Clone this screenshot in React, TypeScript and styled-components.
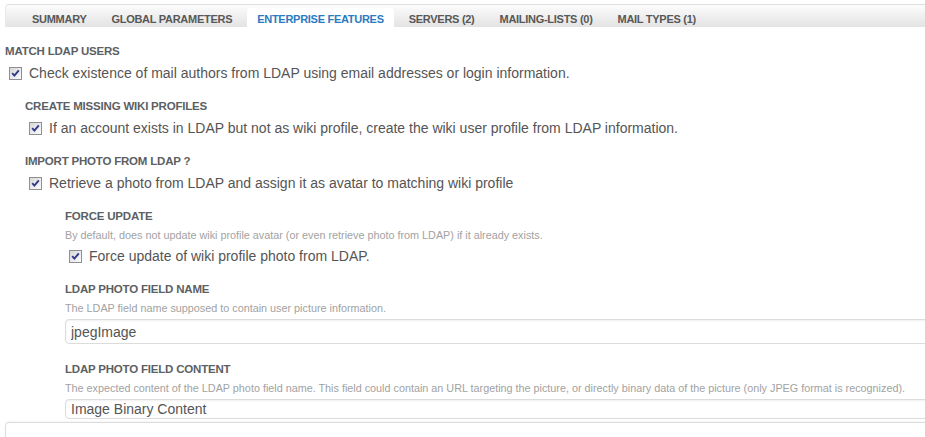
import React, { useEffect, useRef } from "react";
import styled, { createGlobalStyle } from "styled-components";

const Global = createGlobalStyle`
  html, body { margin: 0; padding: 0; background: #fff; overflow: clip; }
  body { font-family: "Liberation Sans", Arial, sans-serif; color: #555; }
`;

const Page = styled.div`
  width: 925px;
  height: 437px;
  position: relative;
  overflow: clip;
`;

const TabBar = styled.nav`
  display: flex;
  align-items: flex-end;
  gap: 5px;
  margin: 4px -20px 0 5px;
  height: 22px;
  padding-left: 16px;
  border-top: 1px solid #dedede;
  border-left: 1px solid #e8e8e8;
  border-top-left-radius: 4px;
  background: linear-gradient(#fcfcfc, #e3e3e3);
`;

const Tab = styled.div<{ $active?: boolean }>`
  height: 19px;
  box-sizing: border-box;
  padding: 3px 10px 0;
  line-height: 16px;
  font-size: 11px;
  letter-spacing: -0.28px;
  font-weight: bold;
  white-space: nowrap;
  color: ${(p) => (p.$active ? "#2a7bc0" : "#585858")};
  background: ${(p) => (p.$active ? "#fff" : "transparent")};
  border-radius: 4px 4px 0 0;
`;

const Content = styled.div`
  padding: 16px 0 0 5px;
`;

const Field = styled.section<{ $indent?: number }>`
  display: flex;
  flex-direction: column;
  align-items: flex-start;
  margin-left: ${(p) => p.$indent ?? 0}px;
  &:not(:first-child) {
    margin-top: 14px;
  }
`;

const Heading = styled.div`
  font-size: 11.5px;
  letter-spacing: -0.2px;
  font-weight: bold;
  line-height: 16px;
  color: #5c5f64;
  white-space: nowrap;
`;

const Desc = styled.div`
  font-size: 10.8px;
  line-height: 14px;
  margin-top: 4px;
  color: #a2a2a2;
  white-space: nowrap;
`;

const Row = styled.label`
  display: flex;
  align-items: center;
  height: 22px;
  margin-top: 3px;
  font-size: 14px;
  color: #555;
  white-space: nowrap;
`;

const Box = styled.span`
  width: 13px;
  height: 13px;
  box-sizing: border-box;
  border: 1px solid #8f8f8f;
  background: linear-gradient(135deg, #d8d8d8, #fbfbfb);
  display: inline-flex;
  align-items: center;
  justify-content: center;
  flex: none;
  margin: 0 7px 0 4px;
`;

const TextInput = styled.input<{ $compact?: boolean }>`
  display: block;
  box-sizing: border-box;
  width: 900px;
  flex: none;
  height: ${(p) => (p.$compact ? 20 : 25)}px;
  margin: 4px 0 ${(p) => (p.$compact ? 0 : 3)}px;
  padding: 0 5px;
  border: 1px solid #dcdcdc;
  border-radius: 4px;
  box-shadow: inset 0 1px 2px rgba(0, 0, 0, 0.06);
  font-family: "Liberation Sans", Arial, sans-serif;
  font-size: 14px;
  color: #555;
  caret-color: #222;
  background: #fff;
  outline: none;
`;

const FooterPanel = styled.div`
  position: absolute;
  left: 5px;
  top: 418px;
  right: -10px;
  bottom: -10px;
  background: #fff;
  border: 1px solid #dcdcdc;
  border-radius: 4px;
  box-shadow: 0 -1px 2px rgba(0, 0, 0, 0.04);
`;

function Check({ label }: { label: string }) {
  return (
    <Row>
      <Box>
        <svg width="11" height="11" viewBox="0 0 11 11">
          <path d="M2.2 5.2 L4.4 7.6 L8.8 2.4" fill="none" stroke="#2e3a88" strokeWidth="1.9" />
        </svg>
      </Box>
      {label}
    </Row>
  );
}

const tabs = [
  "SUMMARY",
  "GLOBAL PARAMETERS",
  "ENTERPRISE FEATURES",
  "SERVERS (2)",
  "MAILING-LISTS (0)",
  "MAIL TYPES (1)",
];

export default function App() {
  const ref = useRef<HTMLInputElement>(null);
  useEffect(() => {
    const el = ref.current;
    if (el) {
      el.focus({ preventScroll: true });
      el.setSelectionRange(el.value.length, el.value.length);
    }
  }, []);
  return (
    <Page>
      <Global />
      <TabBar>
        {tabs.map((t) => (
          <Tab key={t} $active={t === "ENTERPRISE FEATURES"}>
            {t}
          </Tab>
        ))}
      </TabBar>
      <Content>
        <Field>
          <Heading>MATCH LDAP USERS</Heading>
          <Check label="Check existence of mail authors from LDAP using email addresses or login information." />
          <Field $indent={20}>
            <Heading>CREATE MISSING WIKI PROFILES</Heading>
            <Check label="If an account exists in LDAP but not as wiki profile, create the wiki user profile from LDAP information." />
          </Field>
          <Field $indent={20}>
            <Heading>IMPORT PHOTO FROM LDAP ?</Heading>
            <Check label="Retrieve a photo from LDAP and assign it as avatar to matching wiki profile" />
            <Field $indent={40}>
              <Heading>FORCE UPDATE</Heading>
              <Desc>
                By default, does not update wiki profile avatar (or even retrieve photo from LDAP) if it already exists.
              </Desc>
              <Check label="Force update of wiki profile photo from LDAP." />
            </Field>
            <Field $indent={40}>
              <Heading>LDAP PHOTO FIELD NAME</Heading>
              <Desc>The LDAP field name supposed to contain user picture information.</Desc>
              <TextInput ref={ref} defaultValue="jpegImage" />
            </Field>
            <Field $indent={40}>
              <Heading>LDAP PHOTO FIELD CONTENT</Heading>
              <Desc>
                The expected content of the LDAP photo field name. This field could contain an URL targeting the picture, or directly binary data of the picture (only JPEG format is recognized).
              </Desc>
              <TextInput $compact defaultValue="Image Binary Content" />
            </Field>
          </Field>
        </Field>
      </Content>
      <FooterPanel />
    </Page>
  );
}
